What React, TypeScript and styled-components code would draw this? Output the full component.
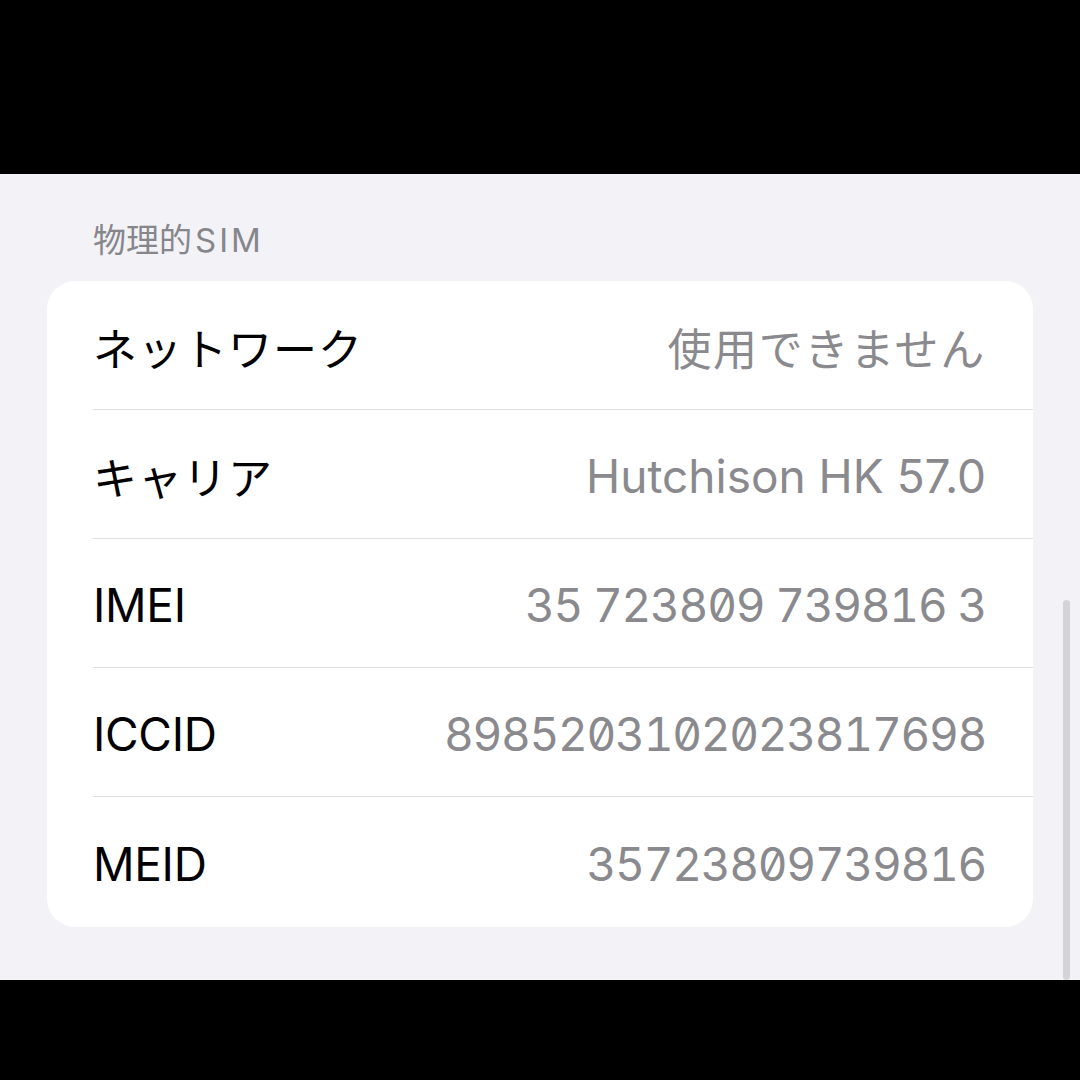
import React from 'react';
import styled, { createGlobalStyle } from 'styled-components';

const GlobalStyle = createGlobalStyle`
  html, body {
    margin: 0;
    padding: 0;
    background: #000000;
  }
  body {
    font-family: 'Inter', 'Noto Sans CJK JP', sans-serif;
    -webkit-font-smoothing: antialiased;
  }
  * {
    box-sizing: border-box;
  }
`;

const Screen = styled.div`
  display: flex;
  flex-direction: column;
  width: 1080px;
  height: 1080px;
  overflow: hidden;
`;

const BlackBar = styled.div<{ $height: number }>`
  height: ${(p) => p.$height}px;
  flex-shrink: 0;
  background: #000000;
`;

const Content = styled.div`
  position: relative;
  flex: 1;
  display: flex;
  flex-direction: column;
  padding: 46px 47px 0 47px;
  background: #f2f2f7;
`;

const SectionHeader = styled.div`
  height: 40px;
  line-height: 40px;
  margin: 0 0 21px 46px;
  font-size: 33px;
  color: #86868b;
`;

const HeaderLatin = styled.span`
  margin-left: 3px;
  letter-spacing: 3px;
`;

const Card = styled.div`
  display: flex;
  flex-direction: column;
  background: #ffffff;
  border-radius: 28px;
  overflow: hidden;
`;

const Row = styled.div`
  padding-left: 46px;
`;

const RowInner = styled.div<{ $last?: boolean }>`
  display: flex;
  align-items: center;
  justify-content: space-between;
  height: ${(p) => (p.$last ? 130 : 129)}px;
  padding: 4px 47px 0 0;
  border-bottom: ${(p) => (p.$last ? 'none' : '1px solid #dedee0')};
`;

const Label = styled.span<{ $jp?: boolean }>`
  font-size: ${(p) => (p.$jp ? 44 : 46)}px;
  color: #000000;
  letter-spacing: ${(p) => (p.$jp ? '1px' : '-0.3px')};
`;

const Value = styled.span<{ $jp?: boolean; $digits?: boolean }>`
  font-size: ${(p) => (p.$jp ? 44 : 46)}px;
  color: #8a8a8e;
  font-feature-settings: ${(p) => (p.$digits ? "'tnum' 1, 'zero' 1" : 'normal')};
  letter-spacing: ${(p) => (p.$jp ? '1.7px' : p.$digits ? '-1.3px' : '0px')};
`;

const ScrollBar = styled.div`
  position: absolute;
  right: 10px;
  top: 426px;
  width: 7px;
  height: 380px;
  border-radius: 4px;
  background: #d4d4d8;
`;

type Item = {
  label: string;
  value: string;
  labelJp?: boolean;
  valueJp?: boolean;
  digits?: boolean;
};

const items: Item[] = [
  { label: 'ネットワーク', value: '使用できません', labelJp: true, valueJp: true },
  { label: 'キャリア', value: 'Hutchison HK 57.0', labelJp: true },
  { label: 'IMEI', value: '35 723809 739816 3', digits: true },
  { label: 'ICCID', value: '8985203102023817698', digits: true },
  { label: 'MEID', value: '35723809739816', digits: true },
];

const App: React.FC = () => {
  return (
    <Screen>
      <GlobalStyle />
      <BlackBar $height={174} />
      <Content>
        <SectionHeader>
          物理的<HeaderLatin>SIM</HeaderLatin>
        </SectionHeader>
        <Card>
          {items.map((item, i) => (
            <Row key={item.label}>
              <RowInner $last={i === items.length - 1}>
                <Label $jp={item.labelJp}>{item.label}</Label>
                <Value $jp={item.valueJp} $digits={item.digits}>
                  {item.value}
                </Value>
              </RowInner>
            </Row>
          ))}
        </Card>
        <ScrollBar />
      </Content>
      <BlackBar $height={100} />
    </Screen>
  );
};

export default App;
